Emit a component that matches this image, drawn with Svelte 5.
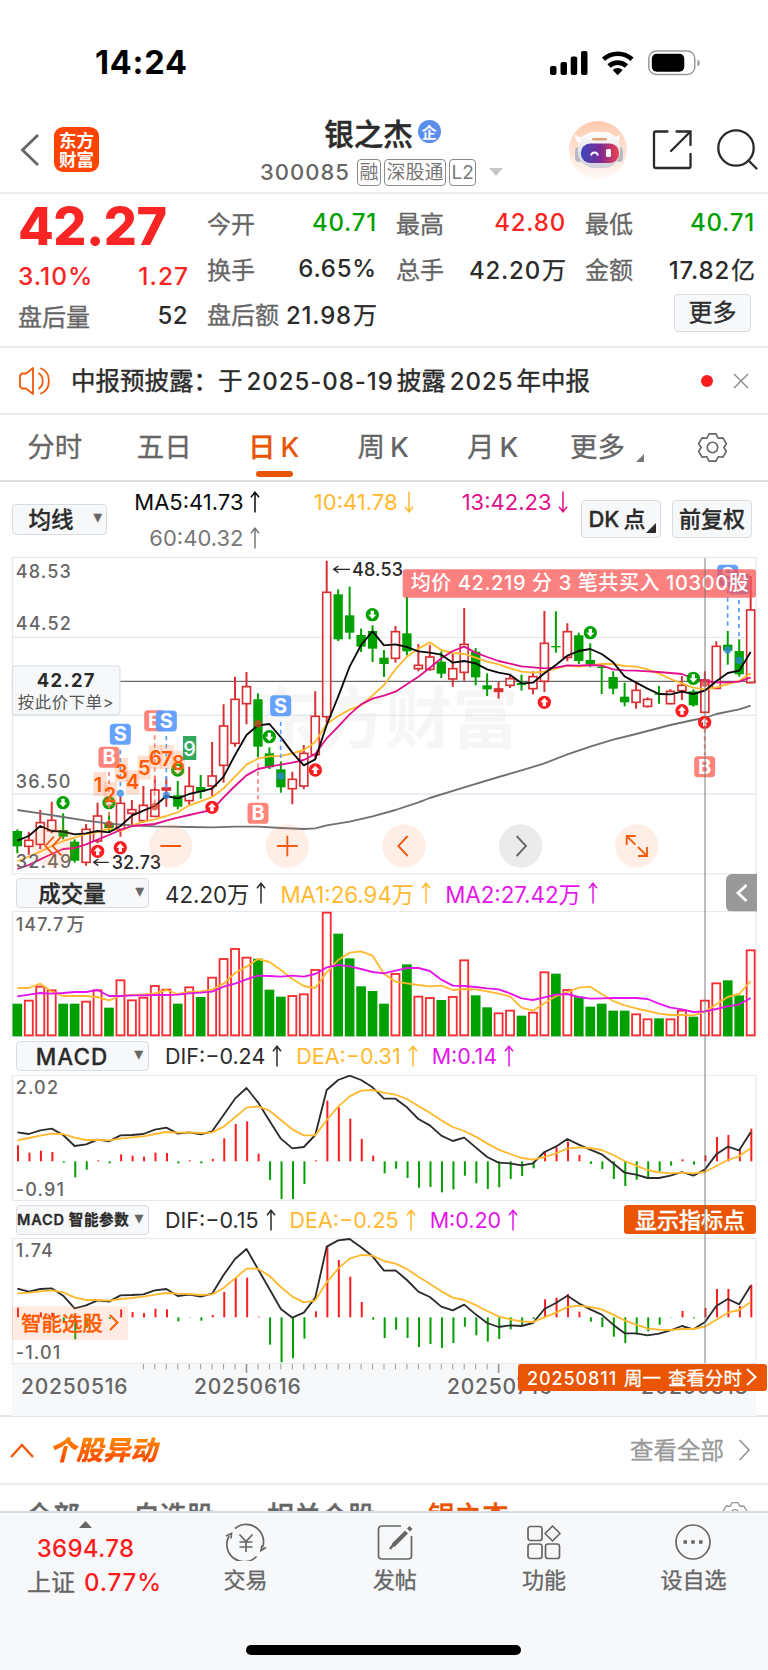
<script lang="ts">
  // Chart coordinates are kept at three units per CSS pixel.
  const STEP = 34.375
  const FIRST_X = 52
  const px = (i: number) => FIRST_X + i * STEP

  const toLine = (ys: number[]) => ys.map((y, i) => `${px(i).toFixed(1)},${y}`).join(' ')
  const toSparseLine = (pts: number[][]) => pts.map(([i, y]) => `${px(i).toFixed(1)},${y}`).join(' ')

  // high, body top, body bottom, low; 'g' bars are filled
  const candles: [string, number, number, number, number][] = [
    ['g', 838, 843, 889, 910], ['r', 845, 871, 889, 914], ['r', 780, 818, 883, 898], ['r', 755, 811, 842, 850],
    ['g', 790, 840, 860, 868], ['g', 868, 875, 932, 938], ['r', 822, 838, 937, 947], ['r', 758, 798, 873, 880],
    ['g', 787, 818, 834, 846], ['r', 740, 760, 838, 860], ['r', 750, 779, 790, 828], ['r', 708, 766, 812, 818],
    ['r', 678, 720, 799, 802], ['r', 680, 714, 720, 770], ['g', 693, 736, 770, 778], ['r', 650, 709, 752, 764],
    ['g', 675, 711, 726, 746], ['r', 576, 678, 708, 738], ['r', 463, 528, 646, 698], ['r', 380, 448, 580, 590],
    ['r', 366, 410, 461, 523], ['g', 430, 448, 590, 622], ['g', 592, 610, 652, 657], ['g', 634, 658, 712, 728],
    ['r', 665, 688, 716, 763], ['r', 585, 610, 708, 718], ['r', 424, 499, 614, 628], ['r', 32, 127, 500, 520],
    ['g', 118, 133, 268, 273], ['g', 110, 196, 248, 268], ['g', 236, 255, 290, 306], ['g', 226, 243, 296, 336],
    ['g', 300, 323, 342, 381], ['r', 228, 245, 325, 338], ['g', 140, 250, 304, 316], ['r', 282, 346, 356, 364],
    ['r', 284, 321, 358, 362], ['g', 304, 335, 371, 384], ['r', 312, 356, 387, 410], ['r', 174, 283, 367, 392],
    ['g', 294, 305, 382, 406], ['g', 370, 406, 418, 438], ['r', 396, 417, 424, 446], ['r', 372, 386, 406, 414],
    ['g', 374, 399, 405, 422], ['r', 364, 380, 416, 433], ['r', 183, 280, 394, 426], ['g', 184, 288, 292, 308],
    ['r', 220, 245, 322, 334], ['g', 248, 256, 333, 342], ['g', 280, 330, 342, 352], ['g', 344, 350, 354, 432],
    ['g', 364, 381, 416, 433], ['g', 398, 440, 457, 469], ['r', 400, 421, 457, 476], ['r', 442, 448, 469, 473],
    ['g', 408, 430, 434, 461], ['r', 418, 424, 461, 463], ['r', 378, 406, 422, 450], ['g', 418, 424, 466, 470],
    ['r', 364, 390, 487, 490], ['r', 274, 289, 415, 418], ['g', 243, 284, 302, 344], ['g', 268, 303, 373, 380],
    ['r', 78, 180, 398, 400],
  ]

  const ma5 = [872, 858, 828, 843, 845, 853, 850, 843, 847, 828, 797, 782, 768, 738, 745, 732, 724, 716, 680, 615, 555, 526, 522, 562, 608, 646, 628, 525, 440, 350, 285, 244, 286, 283, 291, 304, 308, 314, 338, 333, 340, 358, 368, 374, 400, 398, 370, 345, 317, 303, 297, 312, 337, 379, 398, 416, 432, 433, 425, 432, 422, 394, 369, 362, 306]
  const ma10 = [933, 920, 905, 888, 873, 863, 852, 846, 836, 843, 827, 815, 808, 798, 787, 766, 754, 741, 715, 680, 644, 626, 619, 618, 610, 600, 576, 522, 498, 479, 466, 436, 405, 358, 320, 296, 277, 300, 309, 312, 323, 335, 343, 355, 365, 368, 365, 356, 347, 350, 346, 342, 342, 348, 350, 358, 371, 387, 400, 413, 418, 412, 402, 393, 370]
  const ma13 = [957, 945, 928, 912, 897, 894, 883, 869, 855, 840, 828, 825, 822, 812, 803, 795, 787, 780, 742, 708, 676, 657, 650, 644, 638, 630, 612, 565, 530, 493, 463, 446, 437, 425, 403, 380, 353, 325, 303, 290, 308, 321, 333, 341, 349, 352, 355, 353, 346, 347, 345, 347, 358, 361, 362, 364, 366, 369, 372, 385, 393, 397, 397, 395, 382]
  const ma60 = [[0, 780], [2, 790], [4, 801], [6, 812], [8, 821], [10, 826], [12, 829], [15, 831], [17, 832], [19, 830], [21, 830], [23, 834], [25, 837], [26, 835], [27, 826], [29, 815], [31, 799], [33, 780], [35, 757], [36, 744], [39, 712], [42, 681], [44, 661], [46, 640], [48, 613], [50, 590], [52, 569], [54, 552], [56, 534], [57, 525], [59, 510], [60, 504], [61, 492], [63, 478], [64, 467]]

  const volTops = [402, 392, 350, 361, 402, 402, 395, 361, 414, 331, 391, 383, 348, 359, 402, 352, 382, 323, 267, 237, 263, 267, 360, 381, 378, 373, 300, 128, 192, 266, 350, 364, 402, 312, 284, 380, 384, 391, 381, 271, 377, 413, 430, 422, 438, 428, 307, 312, 360, 381, 411, 402, 423, 423, 433, 448, 446, 448, 422, 441, 392, 340, 332, 377, 241]
  const volMa1 = [355, 355, 342, 366, 379, 379, 379, 382, 392, 379, 376, 374, 371, 361, 373, 367, 365, 360, 342, 310, 291, 268, 277, 301, 328, 349, 355, 308, 271, 249, 245, 258, 312, 336, 341, 346, 350, 348, 361, 358, 359, 365, 372, 380, 414, 423, 401, 380, 367, 354, 351, 373, 394, 407, 416, 424, 432, 436, 436, 437, 426, 404, 382, 373, 334]
  const volMa2 = [380, 375, 370, 372, 370, 367, 367, 361, 379, 379, 377, 377, 376, 376, 375, 371, 369, 366, 351, 342, 329, 318, 319, 321, 318, 321, 313, 293, 286, 290, 298, 307, 311, 303, 295, 295, 304, 330, 348, 349, 352, 356, 359, 371, 386, 391, 383, 375, 373, 382, 387, 386, 385, 385, 385, 388, 402, 414, 419, 427, 425, 418, 410, 404, 385]

  type Macd = { max: string; min: string; top: number; zero: number; bars: number[]; dif: number[]; dea: number[] }

  const macd: Macd = {
    max: '2.02',
    min: '-0.91',
    top: 615,
    zero: 874,
    bars: [826, 848, 842, 846, 878, 922, 899, 871, 880, 853, 857, 860, 848, 849, 880, 871, 880, 867, 805, 762, 754, 851, 930, 987, 987, 942, 871, 692, 712, 746, 807, 857, 910, 896, 924, 953, 951, 967, 958, 917, 940, 957, 952, 927, 918, 895, 845, 832, 815, 855, 882, 897, 927, 948, 929, 923, 905, 887, 868, 884, 856, 801, 795, 838, 776],
    dif: [787, 792, 781, 776, 795, 828, 823, 809, 814, 796, 795, 792, 779, 773, 791, 787, 793, 784, 735, 686, 654, 697, 752, 806, 835, 831, 795, 660, 630, 617, 630, 652, 686, 686, 712, 747, 766, 797, 813, 803, 832, 861, 878, 880, 886, 880, 846, 830, 807, 824, 839, 853, 880, 908, 914, 924, 924, 917, 906, 917, 899, 853, 830, 841, 787],
    dea: [811, 804, 797, 791, 792, 803, 810, 810, 811, 806, 802, 799, 792, 786, 788, 787, 789, 787, 770, 742, 713, 709, 722, 750, 778, 796, 796, 750, 710, 679, 662, 660, 668, 674, 687, 708, 728, 751, 771, 783, 800, 820, 839, 852, 864, 869, 861, 850, 836, 832, 834, 840, 855, 873, 887, 900, 907, 910, 908, 910, 906, 888, 870, 859, 834],
  }

  const macdSmart: Macd = {
    max: '1.74',
    min: '-1.01',
    top: 114,
    zero: 352,
    bars: [323, 343, 337, 338, 366, 418, 384, 350, 357, 328, 336, 339, 326, 328, 364, 353, 362, 345, 276, 234, 233, 350, 434, 487, 475, 416, 334, 140, 180, 230, 306, 359, 414, 389, 414, 441, 432, 444, 429, 380, 406, 425, 417, 388, 376, 357, 298, 293, 282, 335, 365, 381, 410, 429, 404, 394, 374, 353, 333, 355, 324, 267, 267, 318, 254],
    dif: [266, 275, 267, 265, 287, 325, 316, 301, 305, 286, 285, 283, 271, 267, 288, 284, 290, 281, 225, 177, 147, 207, 267, 327, 353, 338, 293, 140, 121, 117, 142, 169, 212, 211, 240, 275, 291, 320, 331, 314, 343, 369, 381, 376, 378, 369, 327, 309, 287, 310, 328, 344, 374, 400, 400, 406, 401, 391, 378, 388, 367, 318, 297, 313, 257],
    dea: [280, 278, 274, 271, 277, 292, 300, 300, 302, 297, 294, 290, 284, 279, 281, 282, 285, 283, 264, 235, 206, 206, 228, 261, 290, 307, 301, 247, 206, 176, 165, 167, 183, 191, 207, 230, 251, 274, 293, 300, 315, 333, 349, 358, 364, 366, 352, 338, 321, 317, 321, 328, 344, 361, 374, 385, 389, 390, 387, 387, 380, 359, 338, 330, 306],
  }

  const sellCircles = [[189, 758], [327, 758], [533, 660], [808, 560], [1117, 194], [1771, 248], [2080, 385]]
  const buyCircles = [[293, 904], [361, 893], [636, 772], [946, 660], [1633, 457], [2046, 482], [2114, 517]]
  const counts = [[300, 702, 294, 705], [331, 732, 330, 736], [364, 660, 364, 666], [398, 697, 398, 697], [433, 653, 433, 654], [466, 621, 466, 624], [501, 621, 501, 628], [535, 638, 535, 640]]

  // label, x, y, dash start, dash end, dot y
  const trades: [string, number, number, number, number, number][] = [
    ['B', 327, 622, 666, 815, 823],
    ['S', 361, 553, 600, 725, 730],
    ['B', 464, 512, 556, 770, 770],
    ['S', 499, 513, 558, 730, 736],
    ['B', 774, 790, 640, 748, 521],
    ['S', 842, 467, 515, 635, 678],
    ['B', 2114, 650, 535, 615, 400],
    ['S', 2217, 101, 150, 258, 331],
    ['S', 2183, 76, 118, 230, 300],
  ]

  const stats = [
    { label: '今开', value: '40.71', tone: 'down' },
    { label: '最高', value: '42.80', tone: 'up' },
    { label: '最低', value: '40.71', tone: 'down' },
    { label: '换手', value: '6.65%', tone: '' },
    { label: '总手', value: '42.20', unit: '万', tone: '' },
    { label: '金额', value: '17.82', unit: '亿', tone: '' },
    { label: '盘后额', value: '21.98', unit: '万', tone: '' },
  ]

  const feedTabs = ['全部', '自选股', '相关个股', '银之杰']
  const ticks = Array.from({ length: 32 }, (_, i) => i + 11)
</script>

{#snippet arrow(dir: string)}
  <svg class="arrow" class:flip={dir === 'down'} width="10" height="22" viewBox="0 0 10 22">
    <path d="M5 21.5V1.2M1 6.2 5 1.2l4 5" fill="none" stroke="currentColor" stroke-width="1.5" />
  </svg>
{/snippet}

{#snippet gear(size: number)}
  <svg width={size} height={size} viewBox="0 0 32 32" fill="none" stroke="currentColor" stroke-width="1.7" stroke-linejoin="round">
    <path d="M12.4 2h7.2l2.2 4.4 5-.3 3.5 6L27.700 16l2.600 3.900-3.500 6-5-.3-2.200 4.400h-7.200l-2.200-4.400-5 .3-3.500-6L4.300 16l-2.600-3.900 3.500-6 5 .3z" />
    <circle cx="16" cy="16" r="5.400" />
  </svg>
{/snippet}

{#snippet macdChart(m: Macd)}
  <svg class="plot" width="768" height="126" viewBox="0 {m.top} 2304 378">
    <path class="frame" d="M37 {m.top + 1}H2268V{m.top + 377}H37z" />
    <g class="axis">
      <text x="47" y={m.top + 57}>{m.max}</text>
      <text x="47" y={m.top + 362}>{m.min}</text>
    </g>
    {#each m.bars as y, i}
      <path d="M{px(i) + 2} {m.zero}V{y}" stroke={y < m.zero ? '#fb1c20' : '#00a000'} stroke-width="6" />
    {/each}
    <polyline class="line" points={toLine(m.dif)} stroke="#2b2b2b" />
    <polyline class="line" points={toLine(m.dea)} stroke="#ffb92e" />
  </svg>
{/snippet}

<div class="screen">
  <div class="status">
    <span class="time">14:24</span>
    <svg width="152" height="26" viewBox="0 0 152 26">
      <rect x="0" y="16" width="6.500" height="9" rx="2" />
      <rect x="10.500" y="12" width="6.500" height="13" rx="2" />
      <rect x="20.700" y="6.500" width="6.500" height="18.500" rx="2" />
      <rect x="31" y="1" width="6.500" height="24" rx="2" />
      <g fill="none" stroke="#000" stroke-width="4.600">
        <path d="M53.500 9.300a21 21 0 0 1 28.500 0" />
        <path d="M59 16a13 13 0 0 1 17.500 0" />
      </g>
      <path d="M67.700 25.200l-5-5.200a7.600 7.600 0 0 1 10 0z" />
      <rect x="98.800" y="1" width="46" height="23.500" rx="7.500" fill="none" stroke="#9a9a9a" stroke-width="1.500" />
      <rect x="101.800" y="3.800" width="32.500" height="18" rx="5" />
      <path d="M147.500 9.500c3 1 3 6 0 7z" fill="#9a9a9a" />
    </svg>
  </div>

  <header class="nav">
    <div class="nav-left">
      <svg width="20" height="32" viewBox="0 0 20 32"><path d="M18 1 2.500 16 18 31" fill="none" stroke="#666" stroke-width="2.800" /></svg>
      <div class="logo"><span>东方</span><span>财富</span></div>
    </div>
    <div class="nav-title">
      <h1>银之杰<i>企</i></h1>
      <p>
        <span class="code">300085</span>
        <span class="tag">融</span><span class="tag">深股通</span><span class="tag">L2</span>
        <svg width="14" height="8" viewBox="0 0 14 8"><path d="M0 0h14L7 8z" fill="#c8c8c8" /></svg>
      </p>
    </div>
    <div class="nav-right">
      <svg width="58" height="58" viewBox="0 0 58 58">
        <defs>
          <linearGradient id="halo" x2="0" y2="1"><stop stop-color="#ffc9ad" /><stop offset="1" stop-color="#fffaf7" /></linearGradient>
          <linearGradient id="visor"><stop stop-color="#3a49bd" /><stop offset=".5" stop-color="#7a2a94" /><stop offset="1" stop-color="#f0414b" /></linearGradient>
          <linearGradient id="shell" x2="0" y2="1"><stop stop-color="#fff" /><stop offset="1" stop-color="#cfd0da" /></linearGradient>
        </defs>
        <circle cx="29" cy="29" r="29" fill="url(#halo)" />
        <path d="M6 13c0 5 2 9 6 11l7-9c-5 2-10 2-13-2zM51 13c0 5-2 9-6 11l-7-9c5 2 10 2 13-2z" fill="#fff" />
        <rect x="6" y="26" width="8" height="15" rx="4" fill="#b9bac6" /><rect x="46" y="26" width="8" height="15" rx="4" fill="#b9bac6" />
        <rect x="9" y="11" width="42" height="36" rx="16" fill="url(#shell)" />
        <rect x="12" y="22.500" width="38" height="19.500" rx="9" fill="url(#visor)" />
        <path d="M22 34.500c1-4 6-4 7 0" fill="none" stroke="#fff" stroke-width="1.800" />
        <rect x="37" y="28" width="5" height="8" rx="1.500" fill="#fff" />
        <rect x="23" y="17" width="15" height="2.500" rx="1.200" fill="#e3a274" />
      </svg>
      <svg width="40" height="40" viewBox="0 0 40 40" fill="none" stroke="#2a2a2a" stroke-width="2.300">
        <path d="M15.500 1.500H3.800Q2 1.500 2 3.300v33Q2 38 3.800 38h33q1.700 0 1.700-1.700V24" stroke-linecap="round" />
        <path d="M24.500 1.500h14V15M38 2 19 21" stroke-linecap="round" />
      </svg>
      <svg width="42" height="42" viewBox="0 0 42 42" fill="none" stroke="#2a2a2a" stroke-width="2.300">
        <circle cx="19" cy="19" r="17.700" /><path d="M31.500 31.500l8 8" stroke-linecap="round" />
      </svg>
    </div>
  </header>

  <section class="quote">
    <div class="quote-main">
      <strong>42.27</strong>
      <p class="change"><span>3.10%</span><span>1.27</span></p>
      <p class="after"><span>盘后量</span><b>52</b></p>
    </div>
    <div class="stats">
      {#each stats as s}
        <p><span>{s.label}</span><b class={s.tone}>{s.value}{#if s.unit}<em>{s.unit}</em>{/if}</b></p>
      {/each}
      <button class="more" type="button">更多</button>
    </div>
  </section>

  <section class="notice">
    <svg width="32" height="28" viewBox="0 0 32 28" fill="none" stroke="#f05a0a" stroke-width="1.800" stroke-linejoin="round">
      <path d="M1 8.500 3 6.500h4L14 1v26l-7-5.500H3L1 19.500z" />
      <path d="M20 6.500c5 3.500 5 11.500 0 15M22 1.500c10.500 4 10.500 21 0 25" stroke-linecap="round" />
    </svg>
    <p>中报预披露：于<b>2025-08-19</b>披露<b>2025</b>年中报</p>
    <i class="dot"></i>
    <svg width="16" height="16" viewBox="0 0 16 16"><path d="M1 1l14 14M15 1 1 15" stroke="#888" stroke-width="1.400" /></svg>
  </section>

  <nav class="periods">
    <span>分时</span>
    <span>五日</span>
    <span class="active">日<b>K</b></span>
    <span>周<b>K</b></span>
    <span>月<b>K</b></span>
    <span class="with-corner">更多<i></i></span>
    <span class="gear">{@render gear(31)}</span>
  </nav>

  <div class="ma-row">
    <button class="select ma-select" type="button">均线<i>▼</i></button>
    <div class="ma-values">
      <span class="c-black">MA5:41.73{@render arrow('up')}</span>
      <span class="c-orange">10:41.78{@render arrow('down')}</span>
      <span class="c-pink">13:42.23{@render arrow('down')}</span>
      <span class="c-gray">60:40.32{@render arrow('up')}</span>
    </div>
    <button class="toggle with-corner" type="button">DK<em>点</em><i></i></button>
    <button class="toggle" type="button">前复权</button>
  </div>

  <div class="charts">
    <svg class="plot" width="768" height="319" viewBox="0 18 2304 957">
      <text class="watermark" x="756" y="578">东方财富</text>
      <path class="frame" d="M37 22H2268V972H37z" />
      <path class="grid" d="M37 262H2268M37 496H2268M37 732H2268" />
      <path d="M37 394H2268" stroke="#6b6b6b" stroke-width="3.500" />

      <g class="axis">
        <text x="47" y="84">48.53</text>
        <text x="47" y="241">44.52</text>
        <text x="47" y="714">36.50</text>
      </g>

      {#each candles as [kind, high, top, bottom, low], i}
        {#if kind === 'g'}
          <path d="M{px(i)} {high}V{low}" stroke="#00a000" stroke-width="6" />
          <rect x={px(i) - 14} y={top} width="28" height={bottom - top} fill="#00a000" />
        {:else}
          <path d="M{px(i)} {high}V{top}M{px(i)} {bottom}V{low}" stroke="#d93034" stroke-width="6" />
          <rect x={px(i) - 12} y={top} width="24" height={bottom - top} fill={bottom - top < 9 ? '#d93034' : '#fff'} fill-opacity={bottom - top < 9 ? 1 : 0.6} stroke="#d93034" stroke-width="5" />
        {/if}
      {/each}

      <polyline class="line" points={toSparseLine(ma60)} stroke="#707070" />
      <polyline class="line" points={toLine(ma10)} stroke="#ffb92e" />
      <polyline class="line" points={toLine(ma13)} stroke="#e0108c" />
      <polyline class="line" points={toLine(ma5)} stroke="#0a0a0a" />
      <g class="axis"><text x="47" y="953">32.49</text></g>

      {#each sellCircles as [x, y]}
        <g transform="translate({x} {y})">
          <circle r="20" fill="#00a000" /><path d="M-5-12H5V0H12L0 13-12 0H-5z" fill="#fff" />
        </g>
      {/each}
      {#each buyCircles as [x, y]}
        <g transform="translate({x} {y})">
          <circle r="20" fill="#fb1c20" /><path d="M-5 12H5V0H12L0-13-12 0H-5z" fill="#fff" />
        </g>
      {/each}

      {#each trades as [label, x, y, from, to, dot]}
        <path d="M{x} {from}V{to}" stroke={label === 'S' ? '#5a9bff' : '#f97f74'} stroke-width="5" stroke-dasharray="13 11" />
        <circle cx={x} cy={dot} r="11" fill={label === 'S' ? '#2f85e0' : '#d8402c'} fill-opacity=".75" />
        <rect x={x - 31.5} y={y - 31.5} width="63" height="63" rx="11" fill={label === 'S' ? '#5a9bff' : '#ff7b6f'} fill-opacity=".93" />
        <text class="trade" x={x} y={y + 21}>{label}</text>
      {/each}

      {#each counts as [bx, by, x, y], i}
        <rect x={bx - 20} y={by - 36} width="40" height="72" fill="#ff8b52" fill-opacity=".27" />
        <text class="count" {x} y={y + 21}>{i + 1}</text>
      {/each}
      <rect x="549" y="558" width="40" height="72" fill="#35a860" />
      <text class="count nine" x="569" y="617">9</text>

      <g class="mark">
        <path d="M280 58H330M295 48 281 58l14 10" transform="translate(720)" />
        <path d="M280 937H326M295 927 281 937l14 10" />
        <text x="1056" y="78">48.53</text>
        <text x="335" y="956">32.73</text>
      </g>

      <rect x="37" y="348" width="323" height="146" rx="8" fill="#f7f8fa" stroke="#d7dbe2" stroke-width="3" />
      <text class="price" x="199" y="411">42.27</text>
      <text class="order" x="53" y="474" textLength="288">按此价下单&gt;</text>

      <rect x="1208" y="58" width="1060" height="85" rx="8" fill="#f95050" fill-opacity=".72" />
      <text class="banner" x="1232" y="121" textLength="1014">均价 42.219 分 3 笔共买入 10300股</text>

      <g class="tools">
        <circle cx="160" cy="888" r="65" /><circle cx="512" cy="888" r="65" /><circle cx="862" cy="888" r="65" />
        <circle cx="1212" cy="888" r="65" /><circle cx="1910" cy="888" r="65" />
        <circle class="next" cx="1562" cy="888" r="65" />
        <path d="M162 860l-26 28 26 28M184 860l-26 28 26 28M481 888h62M831 888h62M862 857v62M1223 858l-28 30 28 30" />
        <path d="M1907 858h-27v27M1882 860l24 24M1914 918h27v-27M1939 916l-25-25" />
        <path class="next-arrow" d="M1550 858l28 30-28 30" />
      </g>
    </svg>

    <div class="indicator">
      <button class="select" type="button">成交量<i>▼</i></button>
      <span class="c-dark">42.20万{@render arrow('up')}</span>
      <span class="c-orange">MA1:26.94万{@render arrow('up')}</span>
      <span class="c-magenta">MA2:27.42万{@render arrow('up')}</span>
      <button class="drawer" type="button" aria-label="展开">
        <svg width="12" height="20" viewBox="0 0 12 20"><path d="M10.500 2 2 10l8.500 8" fill="none" stroke="#fff" stroke-width="2.800" /></svg>
      </button>
    </div>
    <svg class="plot" width="768" height="126" viewBox="0 124 2304 378">
      <path class="frame" d="M37 125H2268V501H37z" />
      {#each volTops as y, i}
        {#if candles[i][0] === 'g'}
          <rect x={px(i) - 14.5} y={y} width="29" height={500 - y} fill="#00a000" />
        {:else}
          <rect x={px(i) - 12} y={y + 1} width="24" height={496 - y} fill="#fff" stroke="#f72c30" stroke-width="5.500" />
        {/if}
      {/each}
      <polyline class="line" points={toLine(volMa1)} stroke="#ffb92e" />
      <polyline class="line" points={toLine(volMa2)} stroke="#e415ea" />
      <g class="axis"><text x="47" y="183">147.7<tspan dx="6">万</tspan></text></g>
    </svg>

    <div class="indicator tall macd-values">
      <button class="select spaced" type="button">MACD<i>▼</i></button>
      <span class="c-dark">DIF:−0.24{@render arrow('up')}</span>
      <span class="c-orange">DEA:−0.31{@render arrow('up')}</span>
      <span class="c-magenta">M:0.14{@render arrow('up')}</span>
    </div>
    {@render macdChart(macd)}

    <div class="indicator mid macd-values">
      <button class="select small" type="button">MACD<em>智能参数</em><i>▼</i></button>
      <span class="c-dark">DIF:−0.15{@render arrow('up')}</span>
      <span class="c-orange">DEA:−0.25{@render arrow('up')}</span>
      <span class="c-magenta">M:0.20{@render arrow('up')}</span>
      <button class="show-points" type="button">显示指标点</button>
    </div>
    {@render macdChart(macdSmart)}

    <div class="dates">
      <svg width="744" height="10" viewBox="0 0 2232 30">
        {#each ticks as i}
          <path d="M{px(i) - 36} 0V{i === 20 || i === 42 ? 27 : 16}" stroke="#999" stroke-width={i === 20 || i === 42 ? 5 : 3} />
        {/each}
      </svg>
      <p><span>20250516</span><span>20250616</span><span>20250716</span><span>20250818</span></p>
    </div>

    <i class="crosshair"></i>
    <a class="smart-pick" href="#pick">智能选股<svg width="10" height="17" viewBox="0 0 10 17"><path d="M1 1l7.500 7.500L1 16" fill="none" stroke="#ff5a00" stroke-width="1.900" /></svg></a>
    <a class="day-link" href="#day">
      <span><b>20250811</b>周一<em>查看分时</em></span><svg width="11" height="18" viewBox="0 0 11 18"><path d="M1 1l8.500 8L1 17" fill="none" stroke="#fff" stroke-width="2" /></svg>
    </a>
  </div>

  <section class="feed-head">
    <svg width="24" height="15" viewBox="0 0 24 15"><path d="M1 14 12 2l11 12" fill="none" stroke="#f05a0a" stroke-width="2.400" /></svg>
    <h2>个股异动</h2>
    <span>查看全部</span>
    <svg width="13" height="22" viewBox="0 0 13 22"><path d="M1.500 1 11 11l-9.500 10" fill="none" stroke="#999" stroke-width="1.800" /></svg>
  </section>
  <div class="feed-tabs">
    {#each feedTabs as tab}
      <span class:active={tab === '银之杰'}>{tab}</span>
    {/each}
    <span class="feed-gear">{@render gear(26)}</span>
  </div>

  <footer class="bottom">
    <div class="index">
      <svg width="13" height="7" viewBox="0 0 13 7"><path d="M6.500 0 13 7H0z" fill="#666" /></svg>
      <b>3694.78</b>
      <p>上证<b>0.77%</b></p>
    </div>
    <div class="item">
      <svg width="42" height="38" viewBox="0 0 42 38">
        <path d="M10 5.500A17.300 17.300 0 0 1 37.500 24.500M31.500 33.500A17.300 17.300 0 0 1 4 13" />
        <path d="M1 13l5.500-2.500-.5 5M41 24.500l-5 3 1-5M14.500 11.500 21 18.500l6.500-7M21 18.500V29M14.500 19h13M14.500 24h13" />
      </svg>
      <span>交易</span>
    </div>
    <div class="item">
      <svg width="42" height="38" viewBox="0 0 42 38">
        <path d="M27 3H8Q4.500 3 4.500 6.500v26Q4.500 36 8 36h26q3.500 0 3.500-3.500V13" />
        <path d="M32.500 9 19 22.500" stroke-width="4.200" /><path d="M34.500 7l2.500-2.500" stroke-width="4.200" /><path d="M20 21l-4 5" stroke-width="2.500" />
      </svg>
      <span>发帖</span>
    </div>
    <div class="item">
      <svg width="42" height="38" viewBox="0 0 42 38">
        <rect x="5" y="3.500" width="14" height="14" rx="2.500" /><rect x="5" y="21" width="14" height="14.500" rx="2.500" />
        <rect x="22.500" y="21" width="14" height="14.500" rx="2.500" /><path d="M29.500 3l7.500 7.500-7.500 7.500-7.500-7.500z" stroke-linejoin="round" />
      </svg>
      <span>功能</span>
    </div>
    <div class="item">
      <svg width="42" height="38" viewBox="0 0 42 38">
        <circle cx="21" cy="19" r="17" />
        <path d="M11.500 19h3.500M19.200 19h3.500M27 19h3.500" stroke-width="3.500" />
      </svg>
      <span>设自选</span>
    </div>
    <i class="home"></i>
  </footer>
</div>

<style>
  :global(body) {
    margin: 0;
    background: #fff;
  }

  .screen {
    width: 768px;
    height: 1670px;
    overflow: hidden;
    font-family: Inter, 'Noto Sans CJK SC', sans-serif;
    color: #2b2b2b;
    background: #fff;
  }

  p,
  h1,
  h2 {
    margin: 0;
  }

  i,
  em {
    font-style: normal;
  }

  b {
    font-weight: 500;
    -webkit-text-stroke: 0;
  }

  svg {
    flex-shrink: 0;
  }

  button {
    box-sizing: border-box;
    padding: 0;
    font-family: inherit;
    color: #2b2b2b;
    background: #f7f8fa;
    border: 1px solid #d9dde3;
    border-radius: 4px;
    white-space: nowrap;
    -webkit-text-stroke: 0.3px currentColor;
  }

  .status {
    display: flex;
    align-items: center;
    justify-content: space-between;
    height: 125px;
    box-sizing: border-box;
    padding: 0 66px 0 95px;
  }

  .time {
    font-size: 32.5px;
    font-weight: 700;
    color: #000;
    letter-spacing: 0.8px;
  }

  .nav {
    display: flex;
    align-items: center;
    height: 69px;
    box-sizing: border-box;
    border-bottom: 2px solid #ebebeb;
  }

  .nav-left {
    display: flex;
    align-items: center;
    gap: 14px;
    width: 240px;
    padding: 0 0 18px 20px;
    box-sizing: border-box;
  }

  .logo {
    display: flex;
    flex-direction: column;
    align-items: center;
    justify-content: center;
    width: 45px;
    height: 45px;
    border-radius: 9px;
    background: #ff4400;
    color: #fff;
    font-size: 17.5px;
    font-weight: 600;
    line-height: 19px;
  }

  .nav-title {
    width: 265px;
    padding-left: 20px;
    margin-top: -8px;
  }

  h1 {
    display: flex;
    align-items: center;
    justify-content: center;
    gap: 5px;
    height: 35px;
    margin-right: 20px;
    font-size: 29.5px;
    font-weight: 500;
    -webkit-text-stroke: 0.5px currentColor;
  }

  h1 i {
    display: flex;
    align-items: center;
    justify-content: center;
    width: 23px;
    height: 23px;
    border-radius: 50%;
    background: #5b8ded;
    color: #fff;
    font-size: 15px;
    font-weight: 700;
    -webkit-text-stroke: 0;
  }

  .nav-title p {
    display: flex;
    align-items: center;
    height: 46px;
  }

  .code {
    width: 97px;
    font-size: 22px;
    font-weight: 500;
    color: #666;
    letter-spacing: 1px;
  }

  .tag {
    height: 25px;
    padding: 0 1.5px;
    margin-right: 3px;
    border: 1.5px solid #8a8a8a;
    border-radius: 4px;
    font-size: 19px;
    line-height: 25px;
    color: #777;
  }

  .nav-title svg {
    margin-left: 10px;
  }

  .nav-right {
    display: flex;
    align-items: center;
    gap: 25px;
    margin: -17px 0 0 44px;
  }

  .quote {
    display: flex;
    height: 154px;
    box-sizing: border-box;
    padding: 2px 12px 0 18px;
    border-bottom: 2px solid #ebedf1;
    font-size: 24px;
  }

  .quote-main {
    width: 170px;
    margin-right: 19px;
    color: #f92424;
  }

  .quote-main strong {
    display: block;
    height: 61px;
    font-size: 52px;
    font-weight: 800;
    line-height: 61px;
    letter-spacing: -0.5px;
  }

  .change,
  .after {
    display: flex;
    align-items: center;
    justify-content: space-between;
    height: 38px;
    font-weight: 500;
    white-space: nowrap;
  }

  .change span {
    margin-right: -1px;
    font-size: 24.5px;
    letter-spacing: 1px;
  }

  .after {
    height: 40px;
  }

  .after span,
  .stats span {
    color: #666;
    font-weight: 400;
    -webkit-text-stroke: 0.3px currentColor;
  }

  .after b {
    color: #2b2b2b;
    letter-spacing: 0.5px;
  }

  .stats {
    display: grid;
    grid-template-columns: repeat(3, 170px);
    grid-auto-rows: 45.5px;
    column-gap: 19px;
    padding-top: 4px;
  }

  .stats p {
    display: flex;
    align-items: center;
    justify-content: space-between;
    white-space: nowrap;
  }

  .stats b {
    letter-spacing: 0.8px;
  }

  .stats em {
    margin-left: 1px;
    font-weight: 400;
    letter-spacing: 0;
    -webkit-text-stroke: 0.3px currentColor;
  }

  .up {
    color: #f92424;
  }

  .down {
    color: #00a000;
  }

  .more {
    grid-column: 3;
    justify-self: end;
    align-self: center;
    width: 77px;
    height: 38px;
    margin: 0 4px 2px 0;
    font-size: 24px;
    line-height: 34px;
  }

  .notice {
    display: flex;
    align-items: center;
    height: 67px;
    box-sizing: border-box;
    padding: 0 19px;
    border-bottom: 2px solid #ebebeb;
  }

  .notice p {
    flex: 1;
    margin: -3px 0 0 20px;
    font-size: 24.5px;
    white-space: nowrap;
    -webkit-text-stroke: 0.4px currentColor;
  }

  .notice b {
    margin: 0 3px 0 4px;
    font-size: 24px;
    letter-spacing: 0.95px;
  }

  .dot {
    width: 12px;
    height: 12px;
    margin-right: 20px;
    border-radius: 50%;
    background: #fb1c20;
  }

  .periods {
    display: flex;
    align-items: center;
    height: 67px;
    box-sizing: border-box;
    border-bottom: 2px solid #d9dde1;
    font-size: 27.5px;
    color: #666;
    -webkit-text-stroke: 0.3px currentColor;
  }

  .periods span {
    position: relative;
    width: 109.5px;
    height: 65px;
    line-height: 65px;
    text-align: center;
  }

  .periods b {
    margin-left: 5px;
  }

  .periods .active {
    color: #ea5504;
    font-weight: 500;
  }

  .periods .active::after {
    content: '';
    position: absolute;
    left: 37px;
    bottom: 3px;
    width: 37px;
    height: 6px;
    border-radius: 3px;
    background: #ea5504;
  }

  .with-corner {
    position: relative;
  }

  .with-corner i {
    position: absolute;
    right: 5px;
    bottom: 5px;
    border-left: 10px solid transparent;
    border-bottom: 10px solid #2b2b2b;
  }

  .periods .with-corner i {
    right: 4px;
    bottom: 18px;
    border-left-width: 8px;
    border-bottom: 8px solid #777;
  }

  .periods .with-corner {
    width: 100px;
  }

  .periods .gear {
    display: flex;
    align-items: center;
    justify-content: center;
    margin-left: 10px;
  }

  .ma-row {
    display: flex;
    align-items: flex-start;
    height: 74px;
    padding-left: 12px;
  }

  .select {
    position: relative;
    width: 133px;
    height: 30px;
    padding-right: 21px;
    font-size: 22.5px;
    font-weight: 500;
    line-height: 25px;
  }

  .select i {
    position: absolute;
    right: 4px;
    top: 0;
    font-family: 'DejaVu Sans', sans-serif;
    font-size: 11px;
    color: #666;
  }

  .spaced {
    letter-spacing: 1px;
  }

  .ma-select {
    width: 95px;
    height: 31px;
    padding-right: 17px;
    margin-top: 22px;
    line-height: 26px;
  }

  .ma-values {
    display: grid;
    grid-template-columns: repeat(3, 154px);
    grid-auto-rows: 36px;
    width: 475.5px;
    margin: 2px 0 0 -1.5px;
    font-size: 22px;
  }

  .ma-values span,
  .indicator span {
    display: flex;
    align-items: center;
    justify-content: flex-end;
    white-space: nowrap;
  }

  .arrow {
    margin-left: 7px;
  }

  .ma-values .arrow {
    margin-left: 6px;
  }

  .flip {
    transform: rotate(180deg);
  }

  .c-black {
    color: #0a0a0a;
  }

  .c-dark {
    color: #2b2b2b;
  }

  .c-orange {
    color: #ffb92e;
  }

  .c-pink {
    color: #e0108c;
  }

  .c-gray {
    color: #777;
  }

  .c-magenta {
    color: #e415ea;
  }

  .toggle {
    width: 80px;
    height: 38px;
    margin: 18px 11px 0 0;
    font-size: 22px;
    font-weight: 500;
    line-height: 34px;
  }

  .toggle.with-corner {
    padding-right: 8px;
  }

  .toggle em {
    margin-left: 4px;
  }

  .toggle.with-corner i {
    right: 4px;
    bottom: 4px;
  }

  .charts {
    position: relative;
    height: 861px;
    box-sizing: border-box;
    border-bottom: 2px solid #e3e6ea;
  }

  .plot {
    display: block;
  }

  .frame {
    fill: none;
    stroke: #e1e4e8;
    stroke-width: 3;
  }

  .grid {
    stroke: #e3e9f1;
    stroke-width: 4;
  }

  .line {
    fill: none;
    stroke-width: 5.5;
    stroke-linejoin: round;
  }

  .axis text {
    font-size: 54px;
    font-weight: 500;
    fill: #666;
    letter-spacing: 3.6px;
  }

  .watermark {
    font-size: 200px;
    font-weight: 700;
    fill: #f6f6f6;
  }

  .trade {
    font-size: 60px;
    font-weight: 700;
    text-anchor: middle;
    fill: #fff;
  }

  .count {
    font-size: 60px;
    font-weight: 600;
    text-anchor: middle;
    fill: #ff5a00;
  }

  .nine {
    font-weight: 500;
    fill: #fff;
  }

  .mark path {
    fill: none;
    stroke: #2b2b2b;
    stroke-width: 4;
  }

  .mark text {
    font-size: 54px;
    font-weight: 500;
    fill: #2b2b2b;
    letter-spacing: 0.5px;
  }

  .price {
    font-size: 55px;
    font-weight: 700;
    text-anchor: middle;
    letter-spacing: 4px;
    fill: #2b2b2b;
  }

  .order {
    font-size: 49px;
    fill: #555;
  }

  .banner {
    font-size: 60px;
    font-weight: 500;
    fill: #fff;
  }

  .tools circle {
    fill: #ff8b52;
    fill-opacity: 0.15;
  }

  .tools .next {
    fill: #9a9a9a;
    fill-opacity: 0.2;
  }

  .tools path {
    fill: none;
    stroke: #f05a0a;
    stroke-width: 5.5;
  }

  .tools .next-arrow {
    stroke: #666;
  }

  .indicator {
    display: flex;
    align-items: center;
    gap: 14px;
    height: 36px;
    padding-left: 16px;
    font-size: 22.3px;
  }

  .indicator .select {
    margin-right: 2px;
  }

  .indicator.mid {
    height: 37px;
  }

  .indicator.tall {
    height: 38px;
  }

  .macd-values {
    font-size: 21.5px;
  }

  .drawer {
    width: 31px;
    height: 38px;
    margin: 0 11px 0 auto;
    border: none;
    border-radius: 6px 0 0 6px;
    background: #999;
  }

  .drawer svg {
    vertical-align: middle;
  }

  .select.small {
    padding: 0;
    text-align: left;
    font-size: 14.5px;
    font-weight: 600;
    letter-spacing: 0.8px;
  }

  .select.small em {
    margin-left: 4px;
    letter-spacing: 0.7px;
  }

  .show-points {
    width: 132px;
    height: 29px;
    margin: 0 12px 0 auto;
    border: none;
    border-radius: 3px;
    background: #ea5504;
    color: #fff;
    font-size: 22px;
    font-weight: 500;
    line-height: 28px;
  }

  .dates {
    height: 52px;
    margin: 0 12px;
    background: #f7f8fa;
  }

  .dates svg {
    display: block;
  }

  .dates p {
    display: flex;
    padding-left: 9px;
    font-size: 21px;
    font-weight: 500;
    line-height: 26px;
    color: #666;
  }

  .dates span {
    flex-shrink: 0;
    width: 173px;
    letter-spacing: 0.8px;
  }

  .dates span:nth-child(2) {
    width: 253px;
  }

  .dates span:nth-child(3) {
    width: 194px;
  }

  .dates span:nth-child(4) {
    width: 110px;
  }

  .crosshair {
    position: absolute;
    left: 704px;
    top: 2px;
    width: 2px;
    height: 805px;
    background: rgba(110, 110, 110, 0.45);
  }

  .smart-pick,
  .day-link {
    position: absolute;
    display: flex;
    align-items: center;
    white-space: nowrap;
    text-decoration: none;
  }

  .smart-pick {
    left: 12px;
    top: 750px;
    width: 116px;
    height: 34px;
    box-sizing: border-box;
    padding: 0 0 2px 9px;
    gap: 6px;
    background: rgba(255, 139, 82, 0.17);
    color: #ff5a00;
    font-size: 20.5px;
    font-weight: 500;
    -webkit-text-stroke: 0.3px currentColor;
  }

  .day-link {
    right: 1px;
    top: 808px;
    width: 249px;
    height: 27px;
    box-sizing: border-box;
    padding: 0 0 1px 9px;
    border-radius: 3px;
    background: #ea5504;
    color: #fff;
    font-size: 18.5px;
    -webkit-text-stroke: 0.3px currentColor;
  }

  .day-link b {
    margin-right: 7px;
    font-size: 18px;
    letter-spacing: 0.9px;
  }

  .day-link em {
    margin-left: 7px;
  }

  .day-link svg {
    margin-left: 4px;
  }

  .feed-head {
    display: flex;
    align-items: center;
    height: 68px;
    box-sizing: border-box;
    padding: 0 17px 0 10px;
    border-bottom: 2px solid #ebebeb;
  }

  h2 {
    flex: 1;
    margin: -3px 0 0 15px;
    font-size: 27px;
    font-weight: 900;
    font-style: italic;
  }

  .feed-head h2 {
    color: transparent;
    background: linear-gradient(#ff8c00 20%, #ff4a00 80%);
    background-clip: text;
    -webkit-background-clip: text;
  }

  .feed-head span {
    margin: -2px 14px 0 0;
    font-size: 23.5px;
    color: #999;
    -webkit-text-stroke: 0.3px currentColor;
  }

  .feed-tabs {
    display: flex;
    height: 26px;
    overflow: hidden;
    padding: 0 20px 0 26px;
    font-size: 27px;
    font-weight: 500;
    line-height: 64px;
    color: #666;
    -webkit-text-stroke: 0.4px currentColor;
  }

  .feed-tabs span {
    margin-right: 53px;
    white-space: nowrap;
  }

  .feed-tabs .active {
    color: #ea5504;
  }

  .feed-tabs .feed-gear {
    margin: 16px 0 0 auto;
    line-height: 0;
    color: #999;
  }

  .bottom {
    position: relative;
    display: flex;
    height: 159px;
    box-sizing: border-box;
    border-top: 2px solid #d9dde3;
    background: #f7f8fa;
    color: #666;
    -webkit-text-stroke: 0.3px currentColor;
  }

  .index {
    display: flex;
    flex-direction: column;
    align-items: center;
    width: 171px;
    padding-top: 8px;
    font-size: 24px;
    line-height: 34px;
  }

  .index > b {
    margin-top: 4px;
  }

  .index p {
    padding-left: 18px;
  }

  .index b {
    color: #fb1c20;
    font-size: 24px;
    letter-spacing: 0.3px;
  }

  .index p b {
    margin-left: 9px;
    letter-spacing: 0.9px;
  }

  .item {
    display: flex;
    flex-direction: column;
    align-items: center;
    width: 149.3px;
    padding-top: 10px;
    font-size: 22px;
    line-height: 38px;
  }

  .item svg {
    fill: none;
    stroke: #666;
    stroke-width: 1.7;
  }

  .home {
    position: absolute;
    left: 246px;
    bottom: 15px;
    width: 275px;
    height: 10px;
    border-radius: 5px;
    background: #000;
  }
</style>
